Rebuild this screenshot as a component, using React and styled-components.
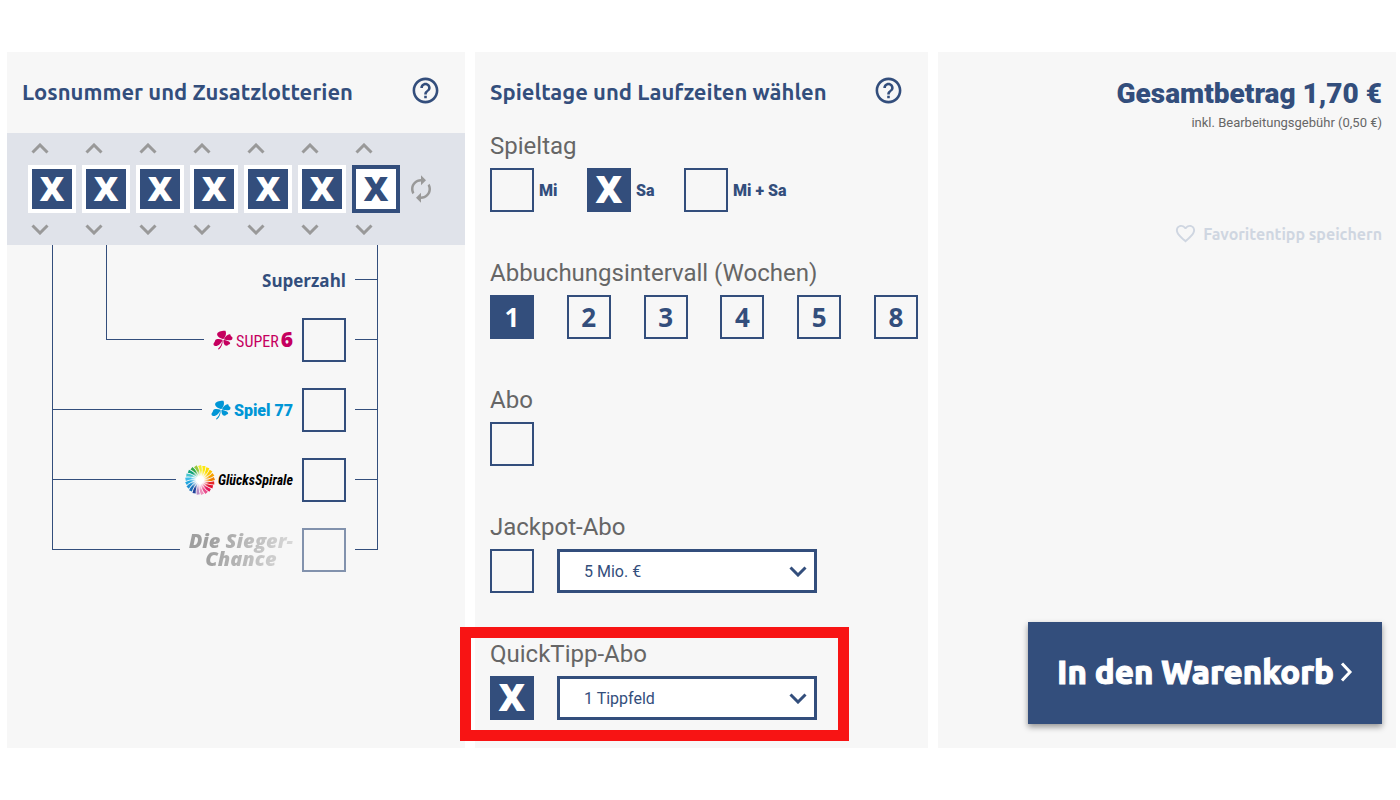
import React from "react";
import styled, { createGlobalStyle } from "styled-components";
import { MdAutorenew, MdFavoriteBorder, MdHelpOutline } from "react-icons/md";

const BLUE = "#334e7c";
const HEADING_FONT = `Ubuntu, "Noto Sans", sans-serif`;
const DIGITS = [1, 2, 3, 4, 5, 6, 7];
const WEEKS = [1, 2, 3, 4, 5, 8];

// clockwise, starting at twelve o'clock
const SPOKES = [
  "#f3ec2e", "#fde910", "#fedc00", "#fcc400", "#f7a000", "#f08000",
  "#e5262a", "#e3102e", "#e5175c", "#e94f8e", "#ee8fbb", "#b98cc4",
  "#23439b", "#1d6fb8", "#1f8fd2", "#22a7e0", "#3bbdea", "#43c3cf",
  "#0fa27a", "#34a94a", "#97c93d",
];

const Chevron = ({ dir = "down", width = 18, height = 11, stroke = 3 }) => {
  const points = {
    up: "1.5,9.5 9,2 16.5,9.5",
    down: "1.5,1.5 9,9 16.5,1.5",
    right: "2,1.5 10,10 2,18.5",
  };
  return (
    <svg
      width={width}
      height={height}
      viewBox={`0 0 ${width} ${height}`}
      fill="none"
      stroke="currentColor"
      strokeWidth={stroke}
      aria-hidden="true"
    >
      <polyline points={points[dir]} />
    </svg>
  );
};

const Clover = () => (
  <svg width="20" height="20" viewBox="0 0 20 20" fill="currentColor" aria-hidden="true">
    <path d="M9.8 9C6.2 8 3.600 5.800 4.200 3.800C4.800 1.600 8.800 .6 12.400 .8C13.800 3.400 12.600 7.200 10.400 9Z" />
    <path d="M11 9C12.400 6 15 3.700 17 4.200C18 4.800 17.400 6 18.400 6.600C20 7 19.800 9.400 18.400 9.900C16 10.600 13.200 10.200 11 9.400Z" />
    <path d="M9.400 9.700C6.600 8.600 3.200 8.800 2.400 10C1.800 11 2 11.800 1.200 12.400C0 13.400 .2 15.600 2.200 16C5.200 16.400 8.200 13.200 9.600 10.200Z" />
    <path d="M10.600 10C12.800 10 16.600 11.400 17.200 13C17.200 14.400 15.900 14.200 15.300 14.800C14.600 15.600 13.200 16.200 12 15.300C10.700 14 10.400 12 10.400 10.200Z" />
    <path d="M9.600 10.400C9.800 13.800 8.600 17 5.800 19.600L4.900 18.900C7.600 16.800 8.800 14 9.200 10.600Z" />
  </svg>
);

const Spiral = () => (
  <svg width="30" height="30" viewBox="-15 -15 30 30" aria-hidden="true">
    <defs>
      <radialGradient id="glow" gradientUnits="userSpaceOnUse" cx="0" cy="0" r="10">
        <stop offset="0.35" stopColor="#fff" />
        <stop offset="1" stopColor="#fff" stopOpacity="0" />
      </radialGradient>
    </defs>
    {SPOKES.map((color, i) => (
      <path
        key={color}
        d="M0 -3.500C-.8 -7 -1.600 -11 -3.900 -13.600L-1 -15C.8 -11 .8 -7 .5 -3.500Z"
        fill={color}
        transform={`rotate(${(i * 360) / SPOKES.length + 8})`}
      />
    ))}
    <circle r="10" fill="url(#glow)" />
  </svg>
);

const Help = () => (
  <IconButton type="button" aria-label="Hilfe">
    <MdHelpOutline size={31} />
  </IconButton>
);

const LotteryRow = ({ id, row, nested, disabled, children }) => (
  <Row $row={row} $nested={nested}>
    <Line />
    <label htmlFor={id}>{children}</label>
    <Box id={id} type="checkbox" disabled={disabled} />
    <Line $short />
  </Row>
);

const App = () => (
  <Page>
    <GlobalStyle />
    <Panel>
      <Header>
        <Title>Losnummer und Zusatzlotterien</Title>
        <Help />
      </Header>
      <Ticket>
        {DIGITS.map((n) => (
          <Digit key={n}>
            <Arrow type="button" aria-label={`Ziffer ${n} erhöhen`}>
              <Chevron dir="up" />
            </Arrow>
            <DigitInput
              aria-label={`Ziffer ${n}`}
              maxLength={1}
              defaultValue="X"
              $last={n === DIGITS.length}
            />
            <Arrow type="button" aria-label={`Ziffer ${n} verringern`}>
              <Chevron />
            </Arrow>
          </Digit>
        ))}
        <Renew type="button" aria-label="Neue Losnummer">
          <MdAutorenew size={30} />
        </Renew>
      </Ticket>
      <Tree>
        <Bracket />
        <Branch />
        <SuperRow>
          Superzahl
          <Line $short />
        </SuperRow>
        <LotteryRow id="super6" row={2} nested>
          <Logo $color="#c5005f">
            <Clover />
            <Super>
              SUPER<b>6</b>
            </Super>
          </Logo>
        </LotteryRow>
        <LotteryRow id="spiel77" row={3}>
          <Logo $color="#0096d6">
            <Clover />
            <Spiel>Spiel 77</Spiel>
          </Logo>
        </LotteryRow>
        <LotteryRow id="gluecksspirale" row={4}>
          <Logo $color="#000">
            <Spiral />
            <Gluecks>GlücksSpirale</Gluecks>
          </Logo>
        </LotteryRow>
        <LotteryRow id="siegerchance" row={5} disabled>
          <Sieger>
            Die Sieger-
            <br />
            Chance
          </Sieger>
        </LotteryRow>
      </Tree>
    </Panel>

    <Panel>
      <Header>
        <Title>Spieltage und Laufzeiten wählen</Title>
        <Help />
      </Header>
      <Groups>
        <Group role="group" aria-labelledby="spieltag">
          <Label as="h3" id="spieltag">Spieltag</Label>
          <Options>
            {["Mi", "Sa", "Mi + Sa"].map((day) => (
              <Day key={day}>
                <Box type="radio" name="day" defaultChecked={day === "Sa"} />
                {day}
              </Day>
            ))}
          </Options>
        </Group>
        <Group role="group" aria-labelledby="intervall">
          <Label as="h3" id="intervall">Abbuchungsintervall (Wochen)</Label>
          <Options $spread>
            {WEEKS.map((week) => (
              <Week key={week}>
                <WeekInput type="radio" name="week" defaultChecked={week === 1} />
                <span>{week}</span>
              </Week>
            ))}
          </Options>
        </Group>
        <Group>
          <Label htmlFor="abo">Abo</Label>
          <Options>
            <Box id="abo" type="checkbox" />
          </Options>
        </Group>
        <Group>
          <Label htmlFor="jackpot">Jackpot-Abo</Label>
          <Options>
            <Box id="jackpot" type="checkbox" />
            <SelectWrap>
              <Select aria-label="Jackpothöhe">
                <option>5 Mio. €</option>
              </Select>
              <Chevron />
            </SelectWrap>
          </Options>
        </Group>
        <Group>
          <Label htmlFor="quicktipp">QuickTipp-Abo</Label>
          <Options>
            <Box id="quicktipp" type="checkbox" defaultChecked />
            <SelectWrap>
              <Select aria-label="Anzahl Tippfelder">
                <option>1 Tippfeld</option>
              </Select>
              <Chevron />
            </SelectWrap>
          </Options>
          <Highlight />
        </Group>
      </Groups>
    </Panel>

    <Summary>
      <Total>Gesamtbetrag 1,70 €</Total>
      <Fee>inkl. Bearbeitungsgebühr (0,50 €)</Fee>
      <Favorite type="button" disabled>
        <MdFavoriteBorder size={23} />
        Favoritentipp speichern
      </Favorite>
      <Cart type="button">
        In den Warenkorb
        <Chevron dir="right" width={13} height={20} />
      </Cart>
    </Summary>
  </Page>
);

const GlobalStyle = createGlobalStyle`
  *, *::before, *::after {
    box-sizing: border-box;
  }

  body {
    margin: 0;
    background: #fff;
    color: #666;
    font-family: Roboto, sans-serif;
  }

  button, input, select {
    margin: 0;
    padding: 0;
    border: 0;
    font-family: inherit;
  }

  button {
    background: none;
    cursor: pointer;
  }

  svg {
    display: block;
    flex: none;
  }
`;

const Page = styled.main`
  display: grid;
  grid-template-columns: 458fr 453fr 458fr;
  gap: 10px;
  padding: 52px 4px 52px 7px;
`;

const Panel = styled.section`
  display: flex;
  flex-direction: column;
  min-width: 0;
  background: #f7f7f7;
`;

const Header = styled.header`
  display: flex;
  justify-content: space-between;
  align-items: center;
  height: 76px;
  padding: 0 24px 0 15px;
`;

const Title = styled.h2`
  margin: 4px 0 0;
  color: ${BLUE};
  font-family: ${HEADING_FONT};
  font-size: 22px;
  font-weight: 700;
  line-height: 28px;
`;

const IconButton = styled.button`
  color: ${BLUE};
`;

const Ticket = styled.div`
  display: flex;
  align-items: center;
  gap: 6px;
  height: 112px;
  margin-top: 5px;
  padding-left: 21px;
  background: #e0e3ea;
`;

const Digit = styled.div`
  display: flex;
  flex-direction: column;
  align-items: flex-start;
  gap: 11px;
`;

const Arrow = styled.button`
  display: flex;
  justify-content: center;
  width: 24px;
  color: #999;
`;

const DigitInput = styled.input`
  width: 48px;
  height: 48px;
  padding-bottom: 2px;
  border: 4px solid ${({ $last }) => ($last ? BLUE : "#fff")};
  background: ${({ $last }) => ($last ? "#fff" : BLUE)};
  color: ${({ $last }) => ($last ? BLUE : "#fff")};
  font-family: "Open Sans", sans-serif;
  font-size: 34px;
  font-weight: 800;
  text-align: center;
`;

const Renew = styled.button`
  color: #999;
`;

const Tree = styled.div`
  display: grid;
  grid-template-columns: 54px 1fr;
  grid-template-rows: 60px repeat(4, 70px);
  margin: 0 87px 0 45px;
`;

const Bracket = styled.div`
  grid-area: 1 / 1 / 6 / 3;
  margin-bottom: 35px;
  border: solid ${BLUE};
  border-width: 0 1px;
`;

const Branch = styled.div`
  grid-area: 1 / 2 / 3 / 3;
  margin-bottom: 35px;
  border-left: 1px solid ${BLUE};
`;

const Row = styled.div`
  display: flex;
  align-items: center;
  gap: 9px;
  grid-row: ${({ $row }) => $row};
  grid-column: ${({ $nested }) => ($nested ? 2 : 1)} / 3;
`;

const SuperRow = styled.div`
  display: flex;
  justify-content: flex-end;
  align-items: center;
  gap: 9px;
  grid-area: 1 / 2;
  padding-top: 10px;
  color: ${BLUE};
  font-family: "Open Sans", sans-serif;
  font-size: 17px;
  font-weight: 700;
`;

const Line = styled.span`
  flex: ${({ $short }) => ($short ? "0 0 23px" : "1")};
  height: 1px;
  margin-bottom: 1px;
  background: ${BLUE};
`;

const Box = styled.input`
  display: grid;
  place-items: center;
  flex: none;
  width: 44px;
  height: 44px;
  padding-bottom: 2px;
  border: 2px solid ${BLUE};
  border-radius: 0;
  appearance: none;

  &:checked {
    background: ${BLUE};
  }

  &:checked::before {
    content: "X";
    color: #fff;
    font-family: "Open Sans", sans-serif;
    font-size: 37px;
    font-weight: 800;
    line-height: 38px;
  }

  &:disabled {
    opacity: 0.6;
  }
`;

const Logo = styled.span`
  display: flex;
  align-items: center;
  gap: 3px;
  color: ${({ $color }) => $color};
`;

const Super = styled.span`
  font-family: "Roboto Condensed", Roboto, sans-serif;
  font-size: 16px;
  font-weight: 400;
  line-height: 20px;

  b {
    margin-left: 2px;
    font-family: "Open Sans", sans-serif;
    font-size: 21px;
    font-weight: 800;
  }
`;

const Spiel = styled.span`
  font-size: 16px;
  font-weight: 900;
`;

const Gluecks = styled.span`
  font-family: "Roboto Condensed", Roboto, sans-serif;
  font-size: 14px;
  font-style: italic;
  font-weight: 700;
`;

const Sieger = styled.span`
  display: block;
  background: linear-gradient(100deg, #a0a0a0 20%, #dcdcdc);
  background-clip: text;
  color: transparent;
  font-family: "Open Sans", sans-serif;
  font-size: 20px;
  font-style: italic;
  font-weight: 800;
  line-height: 18px;
  text-align: center;
`;

const Groups = styled.div`
  display: flex;
  flex-direction: column;
  gap: 45px;
  padding: 2px 10px 28px 15px;
`;

const Group = styled.div`
  position: relative;
`;

const Label = styled.label`
  display: block;
  margin: 0 0 6px;
  font-size: 24px;
  font-weight: 400;
  line-height: 32px;
`;

const Options = styled.div`
  display: flex;
  justify-content: ${({ $spread }) => ($spread ? "space-between" : "flex-start")};
`;

const Day = styled.label`
  display: flex;
  align-items: center;
  gap: 5px;
  min-width: 97px;
  color: ${BLUE};
  font-size: 16px;
  font-weight: 900;
`;

const Week = styled.label`
  display: grid;
  place-items: center;
  color: ${BLUE};
  font-family: "Noto Sans", sans-serif;
  font-size: 26px;
  font-weight: 700;
  line-height: 44px;

  > * {
    grid-area: 1 / 1;
  }

  span {
    z-index: 1;
  }

  input:checked + span {
    color: #fff;
  }
`;

const WeekInput = styled(Box)`
  &:checked::before {
    content: none;
  }
`;

const SelectWrap = styled.div`
  display: grid;
  grid-template-columns: 1fr auto;
  align-items: center;
  width: 260px;
  margin-left: 23px;
  color: ${BLUE};

  svg {
    grid-area: 1 / 2;
    margin-right: 10px;
    pointer-events: none;
  }
`;

const Select = styled.select`
  grid-area: 1 / 1 / 2 / 3;
  height: 44px;
  padding: 0 24px;
  border: 3px solid ${BLUE};
  border-radius: 0;
  background: #fff;
  color: ${BLUE};
  font-size: 16px;
  appearance: none;
`;

const Highlight = styled.div`
  position: absolute;
  top: -11px;
  bottom: -21px;
  left: -30px;
  width: 389px;
  border: 11px solid #f81414;
  pointer-events: none;
`;

const Summary = styled.aside`
  display: flex;
  flex-direction: column;
  align-items: flex-end;
  padding: 24px 14px 24px 0;
  background: #f7f7f7;
`;

const Total = styled.strong`
  color: ${BLUE};
  font-size: 28px;
  font-weight: 900;
  line-height: 36px;
`;

const Fee = styled.small`
  font-size: 13px;
  line-height: 22px;
`;

const Favorite = styled.button`
  display: flex;
  align-items: center;
  gap: 6px;
  margin-top: 88px;
  color: #cfd6e1;
  font-family: ${HEADING_FONT};
  font-size: 16px;
  font-weight: 700;
`;

const Cart = styled.button`
  display: flex;
  justify-content: center;
  align-items: center;
  gap: 6px;
  width: 354px;
  height: 102px;
  margin-top: auto;
  padding-bottom: 3px;
  background: ${BLUE};
  box-shadow: 0 3px 6px rgba(0, 0, 0, 0.4);
  color: #fff;
  font-family: ${HEADING_FONT};
  font-size: 33px;
  font-weight: 800;
  -webkit-text-stroke: 1px #fff;
`;

export default App;
